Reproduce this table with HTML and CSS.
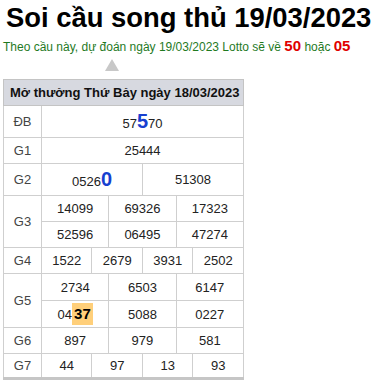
FILE: index.html
```html
<!DOCTYPE html>
<html lang="vi">
<head>
  <meta charset="UTF-8" />
  <title>Soi cầu song thủ 19/03/2023</title>
  <link rel="stylesheet" href="styles.css">
</head>
<body>
  <h1 class="title">Soi cầu song thủ 19/03/2023</h1>
  <p class="predict">Theo cầu này, dự đoán ngày 19/03/2023 Lotto sẽ về <b class="hot">50</b> hoặc <b class="hot">05</b></p>
  <div class="arrow"></div>

  <table class="kq">
    <colgroup>
      <col class="c-lbl">
      <col span="12">
    </colgroup>
    <thead>
      <tr><th colspan="13">Mở thưởng Thứ Bảy ngày 18/03/2023</th></tr>
    </thead>
    <tbody>
      <tr class="tall">
        <td class="lbl">ĐB</td>
        <td colspan="12">57<span class="big">5</span>70</td>
      </tr>
      <tr>
        <td class="lbl">G1</td>
        <td colspan="12">25444</td>
      </tr>
      <tr class="tall">
        <td class="lbl">G2</td>
        <td colspan="6">0526<span class="big">0</span></td>
        <td colspan="6">51308</td>
      </tr>
      <tr>
        <td class="lbl" rowspan="2">G3</td>
        <td colspan="4">14099</td>
        <td colspan="4">69326</td>
        <td colspan="4">17323</td>
      </tr>
      <tr>
        <td colspan="4">52596</td>
        <td colspan="4">06495</td>
        <td colspan="4">47274</td>
      </tr>
      <tr>
        <td class="lbl">G4</td>
        <td colspan="3">1522</td>
        <td colspan="3">2679</td>
        <td colspan="3">3931</td>
        <td colspan="3">2502</td>
      </tr>
      <tr class="g5">
        <td class="lbl" rowspan="2">G5</td>
        <td colspan="4">2734</td>
        <td colspan="4">6503</td>
        <td colspan="4">6147</td>
      </tr>
      <tr class="g5">
        <td colspan="4">04<span class="mark">37</span></td>
        <td colspan="4">5088</td>
        <td colspan="4">0227</td>
      </tr>
      <tr>
        <td class="lbl">G6</td>
        <td colspan="4">897</td>
        <td colspan="4">979</td>
        <td colspan="4">581</td>
      </tr>
      <tr class="last">
        <td class="lbl">G7</td>
        <td colspan="3">44</td>
        <td colspan="3">97</td>
        <td colspan="3">13</td>
        <td colspan="3">93</td>
      </tr>
    </tbody>
  </table>
</body>
</html>
```

FILE: styles.css
```css
* { box-sizing: border-box; }
body {
  margin: 0;
  padding: 0 3px;
  font-family: "Liberation Sans", Arial, sans-serif;
  background: #fff;
  color: #222;
}
.title {
  margin: 0;
  padding: 3px 0 0 3px;
  font-size: 27.4px;
  line-height: 30px;
  font-weight: bold;
  color: #000;
  white-space: nowrap;
}
.predict {
  margin: 4px 0 0;
  font-size: 12px;
  line-height: 18px;
  color: #1f7a1f;
  white-space: nowrap;
}
.hot {
  color: #e00000;
  font-size: 15px;
}
.arrow {
  width: 0;
  height: 0;
  margin: 3px 0 8px 102px;
  border-left: 7px solid transparent;
  border-right: 7px solid transparent;
  border-bottom: 12px solid #c8c8c8;
}
.kq {
  width: 241px;
  border-collapse: collapse;
  table-layout: fixed;
  font-size: 13px;
  border-bottom: 3px solid #c6c6c6;
}
.kq .c-lbl { width: 38px; }
.kq th {
  background: #d7d9e0;
  border: 1px solid #c4c4c4;
  text-align: left;
  padding: 0 0 0 6px;
  height: 26px;
  font-size: 13px;
  font-weight: bold;
  color: #111;
  white-space: nowrap;
}
.kq td {
  border: 1px solid #cfcfcf;
  text-align: center;
  height: 26px;
  padding: 0;
}
.kq tr.tall td { height: 32px; }
.kq tr.g5 td { height: 27px; }
.kq tr.last td { height: 25px; }
.kq td.lbl {
  color: #444;
}
.big {
  color: #1740d0;
  font-size: 20px;
  font-weight: bold;
}
.mark {
  display: inline-block;
  background: #ffcf7a;
  color: #000;
  font-weight: bold;
  font-size: 15px;
  padding: 2px 2px;
  line-height: 18px;
}
```
